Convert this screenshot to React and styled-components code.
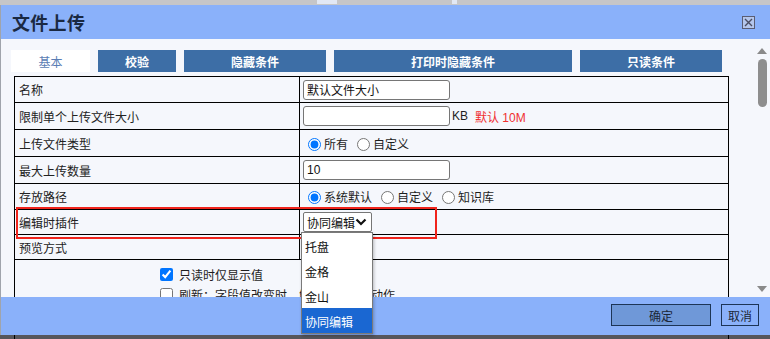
import React from 'react';
import styled, { createGlobalStyle } from 'styled-components';

const GlobalStyle = createGlobalStyle`
    html, body {
        margin: 0;
        padding: 0;
        background: #c6c6c8;
        overflow: hidden;
    }
    body {
        font-family: "Liberation Sans", "Noto Sans CJK SC", sans-serif;
        font-size: 12px;
        color: #1e1e1e;
    }
`

const tabs = ['基本', '校验', '隐藏条件', '打印时隐藏条件', '只读条件'];
const tabWidths = [79, 78, 142, 238, 142];

const options = ['托盘', '金格', '金山', '协同编辑'];

export default function App() {
    return (
        <>
            <GlobalStyle />
            <Page>
                <TopStrip>
                    <Peek $left={317} $w={20} />
                    <Peek $left={452} $w={5} />
                </TopStrip>
                <Dialog>
                    <TitleBar>
                        <Title>文件上传</Title>
                        <CloseBtn>
                            <svg width="13" height="13" viewBox="0 0 13 13">
                                <rect x="0.5" y="0.5" width="12" height="12" fill="#b4c6ec" stroke="#5a5d72" />
                                <path d="M3 3 L10 10 M10 3 L3 10" stroke="#4a4d62" strokeWidth="1.4" />
                            </svg>
                        </CloseBtn>
                    </TitleBar>
                    <Body>
                        <Content>
                            <Tabs>
                                {tabs.map((t, i) => (
                                    <Tab key={t} $active={i === 0} $w={tabWidths[i]}>{t}</Tab>
                                ))}
                            </Tabs>
                            <FormTable>
                                <colgroup>
                                    <col style={{ width: 285 }} />
                                    <col />
                                </colgroup>
                                <tbody>
                                    <Row $h={26}>
                                        <Label>名称</Label>
                                        <Value><TextInput defaultValue="默认文件大小" /></Value>
                                    </Row>
                                    <Row $h={27}>
                                        <Label>限制单个上传文件大小</Label>
                                        <Value>
                                            <TextInput />
                                            <Unit>KB</Unit>
                                            <Hint>默认 10M</Hint>
                                        </Value>
                                    </Row>
                                    <Row $h={27}>
                                        <Label>上传文件类型</Label>
                                        <Value>
                                            <Choice><input type="radio" name="t" defaultChecked />所有</Choice>
                                            <Choice><input type="radio" name="t" />自定义</Choice>
                                        </Value>
                                    </Row>
                                    <Row $h={27}>
                                        <Label>最大上传数量</Label>
                                        <Value><TextInput defaultValue="10" /></Value>
                                    </Row>
                                    <Row $h={26}>
                                        <Label>存放路径</Label>
                                        <Value>
                                            <Choice><input type="radio" name="p" defaultChecked />系统默认</Choice>
                                            <Choice><input type="radio" name="p" />自定义</Choice>
                                            <Choice><input type="radio" name="p" />知识库</Choice>
                                        </Value>
                                    </Row>
                                    <Row $h={25}>
                                        <Label>编辑时插件</Label>
                                        <Value>
                                            <SelectWrap>
                                                <SelectBox>
                                                    协同编辑
                                                    <svg width="12" height="8" viewBox="0 0 12 8">
                                                        <path d="M1.5 1.5 L6 6 L10.5 1.5" fill="none" stroke="#111" strokeWidth="2.2" />
                                                    </svg>
                                                </SelectBox>
                                                <DropList>
                                                    {options.map((o, i) => (
                                                        <Option key={o} $selected={i === options.length - 1}>{o}</Option>
                                                    ))}
                                                </DropList>
                                            </SelectWrap>
                                        </Value>
                                    </Row>
                                    <Row $h={25}>
                                        <Label>预览方式</Label>
                                        <Value />
                                    </Row>
                                    <Row $h={80}>
                                        <Checks colSpan={2}>
                                            <CheckLine><input type="checkbox" defaultChecked />只读时仅显示值</CheckLine>
                                            <CheckLine><input type="checkbox" />刷新：字段值改变时，触发表单刷新动作</CheckLine>
                                        </Checks>
                                    </Row>
                                </tbody>
                            </FormTable>
                            <Highlight />
                        </Content>
                        <ScrollBar>
                            <Arrow viewBox="0 0 10 7"><path d="M0 7 L5 1 L10 7 Z" fill="#8a8a8a" /></Arrow>
                            <Thumb />
                            <Spacer />
                            <Arrow viewBox="0 0 10 7"><path d="M0 0 L5 6 L10 0 Z" fill="#8a8a8a" /></Arrow>
                        </ScrollBar>
                    </Body>
                    <Footer>
                        <FooterBtn $primary>确定</FooterBtn>
                        <FooterBtn>取消</FooterBtn>
                    </Footer>
                </Dialog>
                <BottomStrip />
            </Page>
        </>
    );
}

const Page = styled.div`
    width: 770px;
    height: 339px;
    display: flex;
    flex-direction: column;
`

const TopStrip = styled.div`
    height: 5px;
    position: relative;
    background: #c6c6c8;
`

const Peek = styled.div`
    position: absolute;
    top: 0;
    left: ${p => p.$left}px;
    width: ${p => p.$w}px;
    height: 4px;
    background: #e2e8f4;
`

const Dialog = styled.div`
    height: 330px;
    display: flex;
    flex-direction: column;
    border-left: 1px solid #a0a4ac;
    background: #f5f7fc;
`

const TitleBar = styled.div`
    height: 34px;
    flex-shrink: 0;
    background: #8ab1fa;
    display: flex;
    align-items: center;
    justify-content: space-between;
    padding: 0 15px 0 11px;
`

const Title = styled.div`
    font-size: 18px;
    font-weight: bold;
    color: #1a2942;
    letter-spacing: 0.3px;
`

const CloseBtn = styled.div`
    display: flex;
    width: 13px;
    height: 13px;
    margin-top: 1px;
`

const Body = styled.div`
    height: 258px;
    flex-shrink: 0;
    display: flex;
`

const Content = styled.div`
    flex: 1;
    position: relative;
    padding: 11px 0 0 10px;
`

const Tabs = styled.div`
    display: flex;
    gap: 8px;
    height: 22px;
`

const Tab = styled.div`
    width: ${p => p.$w}px;
    display: flex;
    align-items: center;
    justify-content: center;
    font-size: 12px;
    font-weight: ${p => (p.$active ? 'normal' : 'bold')};
    color: ${p => (p.$active ? '#5a7db4' : '#ffffff')};
    background: ${p => (p.$active ? '#ffffff' : '#3d6ea6')};
`

const FormTable = styled.table`
    margin: 4px 0 0 3px;
    width: 715px;
    border-collapse: collapse;
    table-layout: fixed;
`

const Row = styled.tr`
    height: ${p => p.$h}px;
`

const Label = styled.td`
    border: 1px solid #000;
    padding: 0 4px;
    color: #222;
    white-space: nowrap;
`

const Value = styled.td`
    border: 1px solid #000;
    padding: 0 3px;
    white-space: nowrap;
`

const TextInput = styled.input`
    box-sizing: border-box;
    width: 147px;
    height: 20px;
    padding: 0 3px;
    border: 1px solid #767676;
    border-radius: 3px;
    background: #fff;
    font-family: "Liberation Sans", "Noto Sans CJK SC", sans-serif;
    font-size: 12px;
    color: #111;
    vertical-align: middle;
`

const Unit = styled.span`
    margin-left: 2px;
    vertical-align: middle;
`

const Hint = styled.span`
    margin-left: 7px;
    color: #f03030;
    vertical-align: middle;
`

const Choice = styled.label`
    margin-right: 4px;
    input {
        vertical-align: -2px;
    }
`

const SelectWrap = styled.div`
    position: relative;
    display: inline-block;
    vertical-align: middle;
`

const SelectBox = styled.div`
    box-sizing: border-box;
    width: 69px;
    height: 20px;
    border: 1px solid #767676;
    border-radius: 2px;
    background: #fff;
    display: flex;
    align-items: center;
    justify-content: space-between;
    padding: 0 4px 0 3px;
    color: #111;
`

const DropList = styled.div`
    position: absolute;
    z-index: 10;
    top: 20px;
    left: -2px;
    width: 72px;
    box-sizing: border-box;
    border: 1px solid #7a7a7a;
    background: #fff;
    box-shadow: 1px 2px 3px rgba(0, 0, 0, 0.25);
`

const Option = styled.div`
    height: 25px;
    display: flex;
    align-items: center;
    padding-left: 3px;
    padding-top: 2px;
    box-sizing: border-box;
    color: ${p => (p.$selected ? '#fff' : '#111')};
    background: ${p => (p.$selected ? '#1a67d2' : 'transparent')};
`

const Checks = styled.td`
    border: 1px solid #000;
    vertical-align: top;
    padding: 4px 0 0 141px;
`

const CheckLine = styled.label`
    display: flex;
    align-items: center;
    height: 20px;
    input {
        margin: 0 6px 0 4px;
        width: 13px;
        height: 13px;
    }
`

const Highlight = styled.div`
    position: absolute;
    left: 15px;
    top: 168px;
    width: 421px;
    height: 32px;
    box-sizing: border-box;
    border: 2px solid #f0241c;
    pointer-events: none;
`

const ScrollBar = styled.div`
    width: 18px;
    display: flex;
    flex-direction: column;
    align-items: center;
    padding: 8px 0 4px;
    box-sizing: border-box;
`

const Arrow = styled.svg`
    width: 10px;
    height: 7px;
    margin-left: 2px;
`

const Thumb = styled.div`
    width: 9px;
    height: 48px;
    margin: 5px 0 0 2px;
    border-radius: 5px;
    background: #8e8e8e;
`

const Spacer = styled.div`
    flex: 1;
`

const Footer = styled.div`
    flex: 1;
    position: relative;
    z-index: 1;
    background: #8ab1fa;
    display: flex;
    align-items: center;
    justify-content: flex-end;
    gap: 10px;
    padding: 0 11px 2px 0;
`

const FooterBtn = styled.div`
    box-sizing: border-box;
    width: ${p => (p.$primary ? '100px' : '38px')};
    height: 22px;
    display: flex;
    align-items: center;
    justify-content: center;
    border: 1px solid #1d3556;
    background: ${p => (p.$primary ? '#6f98d8' : '#8ab1fa')};
    color: #1b2738;
    font-size: 12px;
`

const BottomStrip = styled.div`
    flex: 1;
    background: #56565c;
`
